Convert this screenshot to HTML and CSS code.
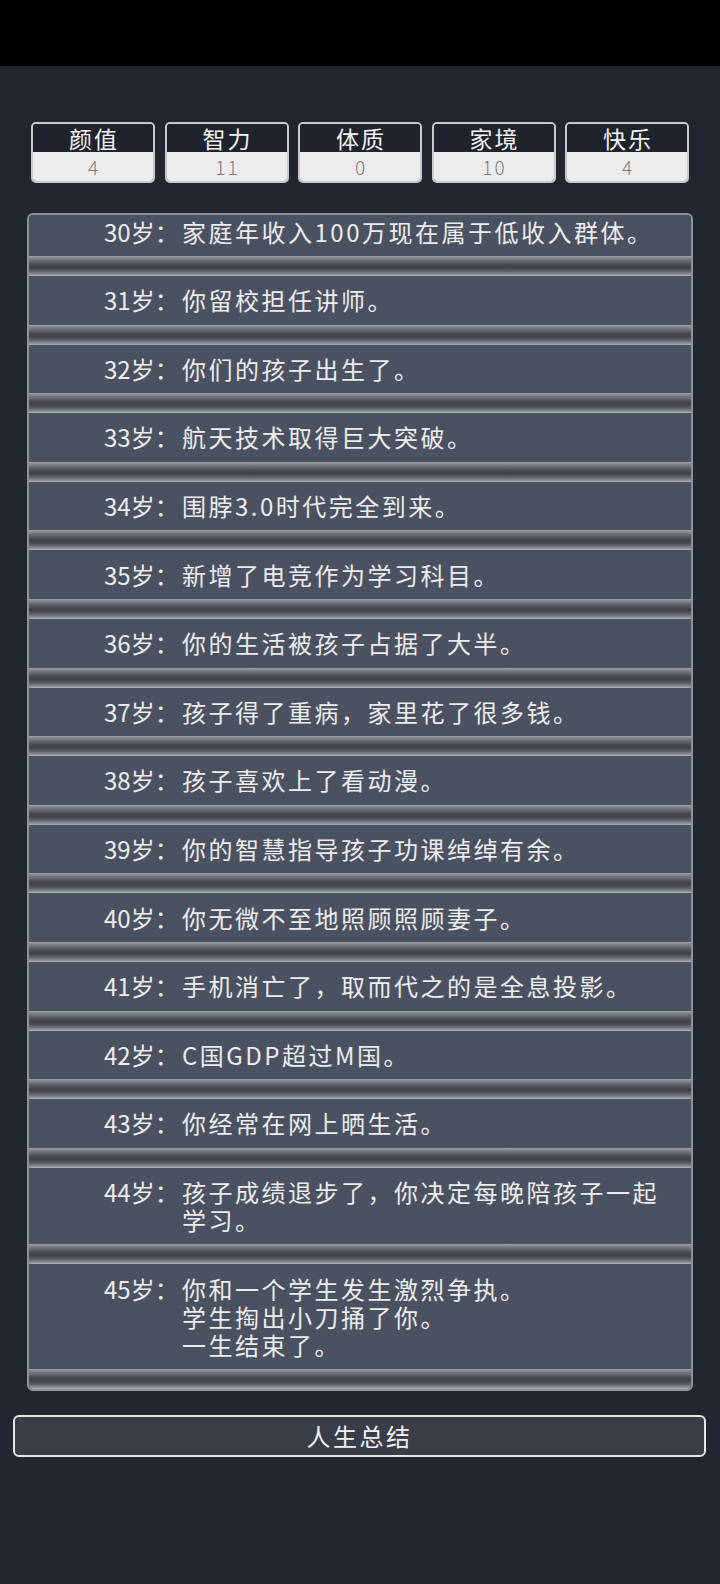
FILE: index.html
```html
<!DOCTYPE html>
<html lang="zh-CN">
<head>
    <meta charset="UTF-8">
    <meta name="viewport" content="width=device-width, initial-scale=1.0">
    <title>人生重开</title>
    <link rel="stylesheet" href="styles.css">
</head>
<body>
    <div class="status-bar"></div>
    <div class="page">
        <div class="stats">
            <div class="stat"><div class="stat-name">颜值</div><div class="stat-value">4</div></div>
            <div class="stat"><div class="stat-name">智力</div><div class="stat-value">11</div></div>
            <div class="stat"><div class="stat-name">体质</div><div class="stat-value">0</div></div>
            <div class="stat"><div class="stat-name">家境</div><div class="stat-value">10</div></div>
            <div class="stat"><div class="stat-name">快乐</div><div class="stat-value">4</div></div>
        </div>

        <div class="history">
            <ul class="events">
                <li><span class="age">30岁：</span><span class="text">家庭年收入100万现在属于低收入群体。</span></li>
                <li><span class="age">31岁：</span><span class="text">你留校担任讲师。</span></li>
                <li><span class="age">32岁：</span><span class="text">你们的孩子出生了。</span></li>
                <li><span class="age">33岁：</span><span class="text">航天技术取得巨大突破。</span></li>
                <li><span class="age">34岁：</span><span class="text">围脖3.0时代完全到来。</span></li>
                <li><span class="age">35岁：</span><span class="text">新增了电竞作为学习科目。</span></li>
                <li><span class="age">36岁：</span><span class="text">你的生活被孩子占据了大半。</span></li>
                <li><span class="age">37岁：</span><span class="text">孩子得了重病，家里花了很多钱。</span></li>
                <li><span class="age">38岁：</span><span class="text">孩子喜欢上了看动漫。</span></li>
                <li><span class="age">39岁：</span><span class="text">你的智慧指导孩子功课绰绰有余。</span></li>
                <li><span class="age">40岁：</span><span class="text">你无微不至地照顾照顾妻子。</span></li>
                <li><span class="age">41岁：</span><span class="text">手机消亡了，取而代之的是全息投影。</span></li>
                <li><span class="age">42岁：</span><span class="text">C国GDP超过M国。</span></li>
                <li><span class="age">43岁：</span><span class="text">你经常在网上晒生活。</span></li>
                <li><span class="age">44岁：</span><span class="text">孩子成绩退步了，你决定每晚陪孩子一起学习。</span></li>
                <li><span class="age">45岁：</span><span class="text">你和一个学生发生激烈争执。<br>学生掏出小刀捅了你。<br>一生结束了。</span></li>
            </ul>
        </div>

        <button class="summary">人生总结</button>
    </div>
</body>
</html>
```

FILE: styles.css
```css
* {
    box-sizing: border-box;
    margin: 0;
    padding: 0;
}
body {
    background-color: #21262f;
    color: #ececec;
    font-family: "Noto Sans CJK SC", "Noto Sans", sans-serif;
    min-height: 1584px;
}
.status-bar {
    height: 66px;
    background-color: #000;
}
.page {
    padding: 56px 14px 0 13px;
}

/* attribute boxes */
.stats {
    display: grid;
    grid-template-columns: repeat(5, 124px);
    gap: 9.5px;
    margin-left: 18px;
}
.stat {
    border: 2px solid #c9cacc;
    border-radius: 5px;
    overflow: hidden;
    text-align: center;
}
.stat-name {
    height: 28px;
    line-height: 28px;
    background-color: #1f232b;
    color: #f4f4f4;
    font-size: 23px;
    letter-spacing: 2px;
    text-indent: 2px;
}
.stat-value {
    height: 29px;
    line-height: 29px;
    background-color: #ececec;
    color: #7c7c7c;
    font-size: 19px;
    font-weight: 300;
    letter-spacing: 2px;
    text-indent: 2px;
}

/* life history list */
.history {
    margin: 30px 13px 0 14px;
    border: 2px solid #8f9399;
    border-radius: 6px;
    overflow: hidden;
    background-color: #3d4048;
}
.events {
    list-style: none;
    margin-top: -7.6px;
}
/* every entry ends in a 20px bevelled groove */
.events li {
    display: flex;
    padding: 10.3px 20px 30.3px 75px;
    line-height: 28px;
    font-size: 24px;
    background:
        linear-gradient(to bottom,
            #a3a7ad 0,
            #8d9197 6%,
            #6a6e74 22%,
            #45484e 45%,
            #3f4248 58%,
            #5e6268 76%,
            #878b91 90%,
            #b0b4ba 100%) left bottom / 100% 20px no-repeat,
        #4a5262;
}
.age {
    flex: 0 0 78px;
    white-space: nowrap;
}
.text {
    letter-spacing: 2.5px;
}

.summary {
    display: block;
    width: 693px;
    height: 42px;
    margin: 24px 0 0 0;
    border: 2px solid #e6e6e6;
    border-radius: 6px;
    background-color: #393d47;
    color: #f2f2f2;
    font-family: inherit;
    font-size: 24px;
    letter-spacing: 2.5px;
    line-height: 38px;
}
```
